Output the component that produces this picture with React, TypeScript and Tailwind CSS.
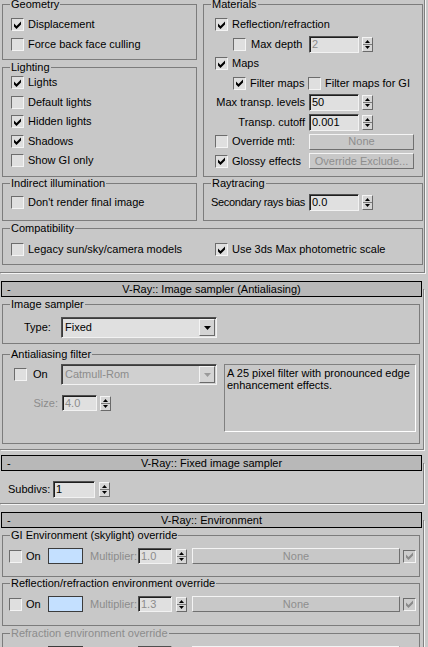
import type { ReactNode } from "react";

const Check = ({ on = false, dim = false, className = "" }: { on?: boolean; dim?: boolean; className?: string }) => (
  <span
    className={`flex h-[13px] w-[13px] shrink-0 items-center justify-center border border-t-[#6c6c6c] border-l-[#6c6c6c] border-r-[#f4f4f4] border-b-[#f4f4f4] ${
      dim ? "bg-[#cdcdcd]" : "bg-[#dfdfdf]"
    } ${className}`}
  >
    {on && (
      <svg width="7" height="8" viewBox="0 0 7 8">
        <polygon points="0,2.5 2.5,5 7,0.5 7,3.5 2.5,8 0,5.5" fill={dim ? "#8a8a8a" : "#000"} />
      </svg>
    )}
  </span>
);

const CheckLabel = ({ label, on = false, dim = false }: { label: string; on?: boolean; dim?: boolean }) => (
  <span className="flex items-center gap-[4px] whitespace-nowrap">
    <Check on={on} />
    <span className={dim ? "text-[#8c8c8c]" : ""}>{label}</span>
  </span>
);

const Row = ({ children, className = "" }: { children: ReactNode; className?: string }) => (
  <div className={`flex h-[19.5px] items-center whitespace-nowrap ${className}`}>{children}</div>
);

const Field = ({ value, className = "", dim = false, dark = false }: { value: string; className?: string; dim?: boolean; dark?: boolean }) => (
  <div
    className={`flex shrink-0 items-center border border-t-[#505050] border-l-[#505050] border-r-[#f2f2f2] border-b-[#f2f2f2] pl-[2px] shadow-[inset_1px_1px_0_#1e1e1e] ${
      dark ? "bg-black" : "bg-[#e0e0e0]"
    } ${dim ? "text-[#8c8c8c]" : ""} ${className}`}
  >
    {value}
  </div>
);

const Spinner = ({ className = "", dim = false }: { className?: string; dim?: boolean }) => (
  <span
    className={`flex h-[15px] w-[11px] shrink-0 items-center justify-center border border-t-[#f4f4f4] border-l-[#f4f4f4] border-r-[#6a6a6a] border-b-[#6a6a6a] bg-[#d6d6d6] ${className}`}
  >
    <svg width="9" height="13" viewBox="0 0 9 13">
      <polygon points="4.5,2 7,5 2,5" fill={dim ? "#8a8a8a" : "#000"} />
      <line x1="0" y1="6.5" x2="9" y2="6.5" stroke="#7a7a7a" strokeWidth="1" />
      <polygon points="2,8 7,8 4.5,11" fill={dim ? "#8a8a8a" : "#000"} />
    </svg>
  </span>
);

const Btn = ({ label, className = "" }: { label: string; className?: string }) => (
  <div
    className={`flex shrink-0 items-center justify-center border border-t-[#f4f4f4] border-l-[#f4f4f4] border-r-[#707070] border-b-[#707070] whitespace-nowrap text-[#8e8e8e] ${className}`}
  >
    {label}
  </div>
);

const Dropdown = ({ value, dim = false }: { value: string; dim?: boolean }) => (
  <div
    className={`flex h-[21px] w-[156px] shrink-0 items-center border border-t-[#505050] border-l-[#505050] border-r-[#f2f2f2] border-b-[#f2f2f2] shadow-[inset_1px_1px_0_#3a3a3a] ${
      dim ? "bg-[#d0d0d0] text-[#8c8c8c]" : "bg-[#e0e0e0]"
    }`}
  >
    <span className="flex-1 pl-[3px]">{value}</span>
    <span className="mr-px flex h-[17px] w-[16px] items-center justify-center border border-t-[#f4f4f4] border-l-[#f4f4f4] border-r-[#6a6a6a] border-b-[#6a6a6a] bg-[#d4d4d4]">
      <svg width="7" height="4" viewBox="0 0 7 4">
        <polygon points="0,0 7,0 3.5,4" fill={dim ? "#9a9a9a" : "#000"} />
      </svg>
    </span>
  </div>
);

const Group = ({ label, className = "", dim = false, children }: { label: string; className?: string; dim?: boolean; children?: ReactNode }) => (
  <fieldset className={`shrink-0 border border-[#7c7c7c] ${className}`}>
    <legend className={`ml-[7px] px-px leading-[12px] ${dim ? "text-[#8c8c8c]" : ""}`}>{label}</legend>
    {children}
  </fieldset>
);

const Rollout = ({ title, className = "", bodyClass = "", children }: { title: string; className?: string; bodyClass?: string; children: ReactNode }) => (
  <div className={className}>
    <div className="relative z-10 ml-px flex h-4 w-[421px] items-center border border-black bg-[#b8b8b8]">
      <span className="w-[30px] pl-[5px]">-</span>
      <span className="flex-1 text-center">{title}</span>
      <span className="w-[30px]" />
    </div>
    <div className={`-mt-2 w-[424px] border-r border-b border-[#808080] pl-[2px] pt-[9px] shadow-[1px_1px_0_#f4f4f4] ${bodyClass}`}>
      {children}
    </div>
  </div>
);

const EnvRow = ({ mult, dark = false }: { mult: string; dark?: boolean }) => (
  <div className="flex h-[16px] items-center whitespace-nowrap">
    <div className="flex w-[45px] items-center gap-[4px] pl-[6px]">
      <Check />
      <span>On</span>
    </div>
    <span className={`h-[16px] w-[35px] shrink-0 border border-[#3c3c3c] ${dark ? "bg-black" : "bg-[#c4e0ff]"}`} />
    <span className="ml-[7px] w-[48px] text-[#8c8c8c]">Multiplier:</span>
    <Field value={dark ? "" : mult} dim dark={dark} className="h-[16px] w-[34px]" />
    <Spinner className="ml-[4px]" dim={dark} />
    <Btn label="None" className="ml-[5px] h-[16px] w-[208px]" />
    <Check on dim className="ml-[3px]" />
  </div>
);

export default function App() {
  return (
    <div className="h-[647px] w-[428px] overflow-hidden bg-[#c8c8c8] font-['Liberation_Sans',Arial,sans-serif] text-[11px] leading-[13px] text-black">
      {/* Global switches rollout (header scrolled off) */}
      <div className="-mt-[2px] h-[275px] w-[425px] border-r border-b border-[#808080] pl-[2px] shadow-[1px_1px_0_#f4f4f4]">
        <div className="flex gap-[6px]">
          <div className="flex w-[195px] flex-col gap-px">
            <Group label="Geometry" className="h-[62px] pt-[5px]">
              <Row className="pl-2">
                <CheckLabel on label="Displacement" />
              </Row>
              <Row className="pl-2">
                <CheckLabel label="Force back face culling" />
              </Row>
            </Group>
            <Group label="Lighting" className="h-[116px]">
              <Row className="pl-2">
                <CheckLabel on label="Lights" />
              </Row>
              <Row className="pl-2">
                <CheckLabel label="Default lights" />
              </Row>
              <Row className="pl-2">
                <CheckLabel on label="Hidden lights" />
              </Row>
              <Row className="pl-2">
                <CheckLabel on label="Shadows" />
              </Row>
              <Row className="pl-2">
                <CheckLabel label="Show GI only" />
              </Row>
            </Group>
          </div>
          <Group label="Materials" className="h-[179px] w-[220px] pt-[5px]">
            <Row className="pl-[11px]">
              <CheckLabel on label="Reflection/refraction" />
            </Row>
            <Row>
              <div className="flex w-[105px] items-center gap-[5px] pl-[29px]">
                <Check />
                <span>Max depth</span>
              </div>
              <Field value="2" dim className="h-[17px] w-[50px]" />
              <Spinner className="ml-[3px]" />
            </Row>
            <Row className="pl-[11px]">
              <CheckLabel on label="Maps" />
            </Row>
            <Row>
              <div className="w-[104px] pl-[29px]">
                <CheckLabel on label="Filter maps" />
              </div>
              <CheckLabel label="Filter maps for GI" />
            </Row>
            <Row>
              <span className="w-[101px] text-right">Max transp. levels</span>
              <Field value="50" className="ml-[4px] h-[17px] w-[50px]" />
              <Spinner className="ml-[3px]" />
            </Row>
            <Row>
              <span className="w-[101px] text-right">Transp. cutoff</span>
              <Field value="0.001" className="ml-[4px] h-[17px] w-[50px]" />
              <Spinner className="ml-[3px]" />
            </Row>
            <Row>
              <div className="w-[105px] pl-[11px]">
                <CheckLabel label="Override mtl:" />
              </div>
              <Btn label="None" className="h-[16px] w-[105px]" />
            </Row>
            <Row>
              <div className="w-[105px] pl-[11px]">
                <CheckLabel on label="Glossy effects" />
              </div>
              <Btn label="Override Exclude..." className="h-[16px] w-[105px]" />
            </Row>
          </Group>
        </div>
        <div className="flex gap-[6px]">
          <Group label="Indirect illumination" className="h-[44px] w-[195px] pt-[4px]">
            <Row className="pl-2">
              <CheckLabel label="Don't render final image" />
            </Row>
          </Group>
          <Group label="Raytracing" className="h-[44px] w-[220px] pt-[4px]">
            <Row className="pl-[7px]">
              <span className="w-[98px] tracking-[-0.3px]">Secondary rays bias</span>
              <Field value="0.0" className="h-[17px] w-[50px]" />
              <Spinner className="ml-[3px]" />
            </Row>
          </Group>
        </div>
        <Group label="Compatibility" className="mt-px h-[43px] w-[421px] pt-[6px]">
          <Row className="pl-2">
            <div className="w-[204px]">
              <CheckLabel label="Legacy sun/sky/camera models" />
            </div>
            <CheckLabel on label="Use 3ds Max photometric scale" />
          </Row>
        </Group>
      </div>

      <Rollout title="V-Ray:: Image sampler (Antialiasing)" className="mt-[8px]" bodyClass="pb-[5px]">
        <Group label="Image sampler" className="h-[46px] w-[418px] pt-[7px]">
          <div className="flex h-[21px] items-center pl-[21px]">
            <span className="w-[37px]">Type:</span>
            <Dropdown value="Fixed" />
          </div>
        </Group>
        <Group label="Antialiasing filter" className="mt-[4px] h-[96px] w-[418px] pt-[4px]">
          <div className="flex">
            <div className="w-[221px]">
              <div className="flex h-[21px] items-center">
                <div className="flex w-[58px] items-center gap-[6px] pl-[11px]">
                  <Check />
                  <span>On</span>
                </div>
                <Dropdown value="Catmull-Rom" dim />
              </div>
              <div className="mt-[10px] flex h-[16px] items-center">
                <span className="w-[57px] pr-[2px] text-right text-[#8c8c8c]">Size:</span>
                <Field value="4.0" dim className="ml-[2px] h-[16px] w-[35px]" />
                <Spinner className="ml-[3px]" />
              </div>
            </div>
            <div className="h-[68px] w-[192px] border border-t-[#808080] border-l-[#808080] border-r-white border-b-white px-[2px] pt-[2px] leading-[12px]">
              A 25 pixel filter with pronounced edge enhancement effects.
            </div>
          </div>
        </Group>
      </Rollout>

      <Rollout title="V-Ray:: Fixed image sampler" className="mt-[5px]" bodyClass="pb-[5px]">
        <div className="mt-[9px] flex h-[17px] items-center pl-[6px]">
          <span className="w-[45px]">Subdivs:</span>
          <Field value="1" className="h-[17px] w-[42px]" />
          <Spinner className="ml-[4px]" />
        </div>
      </Rollout>

      <Rollout title="V-Ray:: Environment" className="mt-[8px]">
        <Group label="GI Environment (skylight) override" className="h-[48px] w-[418px] pt-[7px]">
          <EnvRow mult="1.0" />
        </Group>
        <Group label="Reflection/refraction environment override" className="h-[49px] w-[418px] pt-[7px]">
          <EnvRow mult="1.3" />
        </Group>
        <Group label="Refraction environment override" dim className="mt-px h-[49px] w-[418px] pt-[7px]">
          <EnvRow mult="1.0" dark />
        </Group>
      </Rollout>
    </div>
  );
}
